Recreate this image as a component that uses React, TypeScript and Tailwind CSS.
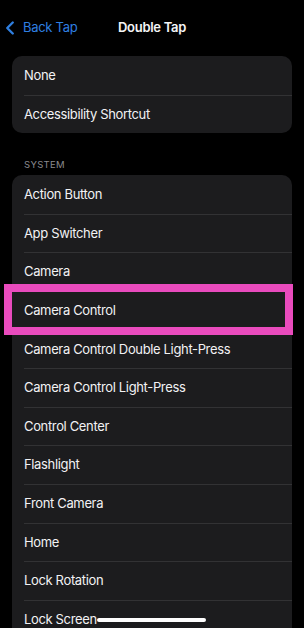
import { ChevronLeft } from "lucide-react";

const TOP = ["None", "Accessibility Shortcut"];

const SYSTEM = [
  "Action Button",
  "App Switcher",
  "Camera",
  "Camera Control",
  "Camera Control Double Light-Press",
  "Camera Control Light-Press",
  "Control Center",
  "Flashlight",
  "Front Camera",
  "Home",
  "Lock Rotation",
  "Lock Screen",
];

function Row({ label, first, highlight }: { label: string; first: boolean; highlight?: boolean }) {
  return (
    <div className="relative h-[38.6px] pl-3">
      <div className={`flex h-full items-center ${first ? "" : "border-t border-[#323234]"}`}>
        <span className="text-[13px] tracking-[-0.35px] text-[#f2f2f4]">{label}</span>
      </div>
      {highlight && (
        <div className="absolute z-10 -left-[8px] -right-[1px] -top-[7px] -bottom-[5px] border-[8px] border-[#e94bbd]" />
      )}
    </div>
  );
}

function Group({ items, highlighted }: { items: string[]; highlighted?: string }) {
  return (
    <div className="mx-3 rounded-[10px] bg-[#1c1c1e]">
      {items.map((label, i) => (
        <Row key={label} label={label} first={i === 0} highlight={label === highlighted} />
      ))}
    </div>
  );
}

export default function App() {
  return (
    <div
      className="relative h-[628px] w-[304px] overflow-hidden bg-black"
      style={{ fontFamily: "Inter, 'Noto Sans', sans-serif" }}
    >
      <div className="grid h-[56px] grid-cols-3 items-center">
        <div className="flex items-center -ml-[1px] text-[#2f7fe0]">
          <ChevronLeft size={22} strokeWidth={2.6} />
          <span className="ml-[2px] text-[13px] tracking-[-0.3px]">Back Tap</span>
        </div>
        <div className="text-center text-[13px] font-semibold tracking-[-0.3px] text-[#f4f4f6]">Double Tap</div>
        <div />
      </div>

      <Group items={TOP} />

      <div className="px-6 pb-[4px] pt-[26px] text-[9.5px] leading-[12px] tracking-[0.3px] text-[#8a8a8f]">
        SYSTEM
      </div>

      <Group items={SYSTEM} highlighted="Camera Control" />

      <div className="absolute z-20 bottom-[6px] left-[97px] h-[4px] w-[109px] rounded-full bg-white" />
    </div>
  );
}
